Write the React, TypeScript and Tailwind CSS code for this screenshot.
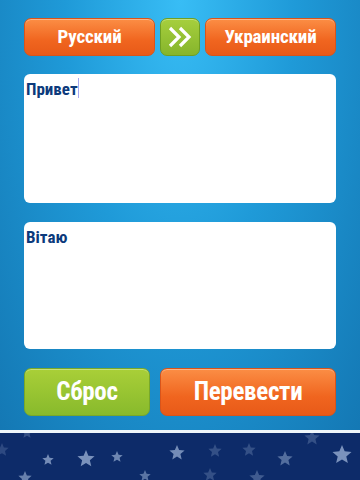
import React from "react";

const Star = ({ x, y, r, o }: { x: number; y: number; r: number; o: number }) => {
  const pts: string[] = [];
  for (let i = 0; i < 10; i++) {
    const a = -Math.PI / 2 + (i * Math.PI) / 5;
    const rr = i % 2 === 0 ? r : r * 0.45;
    pts.push(`${(x + rr * Math.cos(a)).toFixed(2)},${(y + rr * Math.sin(a)).toFixed(2)}`);
  }
  return <polygon points={pts.join(" ")} fill="#8ea5cb" opacity={o} />;
};

const stars = [
  { x: 27, y: 13, r: 6, o: 0.3 },
  { x: 2, y: 30, r: 7, o: 0.25 },
  { x: 48, y: 40, r: 6, o: 0.8 },
  { x: 86, y: 39, r: 9, o: 0.85 },
  { x: 117, y: 37, r: 6, o: 0.75 },
  { x: 145, y: 56, r: 6, o: 0.6 },
  { x: 177, y: 33, r: 8, o: 0.8 },
  { x: 25, y: 58, r: 7, o: 0.7 },
  { x: 215, y: 31, r: 7, o: 0.3 },
  { x: 249, y: 30, r: 7, o: 0.3 },
  { x: 285, y: 39, r: 8, o: 0.55 },
  { x: 312, y: 18, r: 8, o: 0.3 },
  { x: 342, y: 35, r: 10, o: 0.85 },
  { x: 210, y: 55, r: 7, o: 0.3 },
  { x: 257, y: 58, r: 8, o: 0.4 },
];

const font = { fontFamily: '"Liberation Sans Narrow", "Roboto Condensed", Roboto, sans-serif' };

export default function App() {
  return (
    <div className="w-[360px] h-[480px] flex flex-col overflow-hidden" style={font}>
      <div className="h-[430px] bg-[radial-gradient(ellipse_at_50%_0%,#38bdf5_0%,#1f9ad8_45%,#1478b4_100%)] px-[24px] pt-[18px] flex flex-col">
        <div className="flex h-[38px] gap-[5px]">
          <div className="flex-1 rounded-[7px] border border-[#d9541a] bg-[linear-gradient(#fb8e45,#f0651f_60%,#e85a18)] flex items-center justify-center text-white font-bold text-[19px] tracking-[-0.2px] shadow-[inset_0_1px_0_rgba(255,255,255,0.35)]">
            Русский
          </div>
          <div className="w-[40px] rounded-[7px] border border-[#6f9f23] bg-[linear-gradient(#a6cf3d,#86b52c)] flex items-center justify-center shadow-[inset_0_1px_0_rgba(255,255,255,0.35)]">
            <svg width="26" height="22" viewBox="0 0 26 22">
              <path d="M3 2 L12 11 L3 20" fill="none" stroke="white" strokeWidth="3.2" strokeLinejoin="miter" />
              <path d="M13 2 L22 11 L13 20" fill="none" stroke="white" strokeWidth="3.2" strokeLinejoin="miter" />
            </svg>
          </div>
          <div className="flex-1 rounded-[7px] border border-[#d9541a] bg-[linear-gradient(#fb8e45,#f0651f_60%,#e85a18)] flex items-center justify-center text-white font-bold text-[19px] tracking-[-0.2px] shadow-[inset_0_1px_0_rgba(255,255,255,0.35)]">
            Украинский
          </div>
        </div>
        <div className="mt-[18px] h-[129px] rounded-[6px] bg-white pl-[2px] pt-[4px]">
          <span className="text-[#0c3a7c] font-bold text-[17px] leading-[20px]">Привет</span>
          <span className="inline-block w-[1px] h-[20px] bg-[#a9a9f0] align-top" />
        </div>
        <div className="mt-[19px] h-[127px] rounded-[6px] bg-white pl-[2px] pt-[4px]">
          <span className="text-[#0c3a7c] font-bold text-[17px] leading-[20px]">Вітаю</span>
        </div>
        <div className="mt-[19px] flex h-[48px] gap-[10px]">
          <div className="w-[126px] rounded-[7px] border border-[#78a82a] bg-[linear-gradient(#a9cf38,#88ba2c)] flex items-center justify-center text-white font-bold text-[25px] tracking-[-0.3px] shadow-[inset_0_1px_0_rgba(255,255,255,0.35)]">
            Сброс
          </div>
          <div className="flex-1 rounded-[7px] border border-[#d9541a] bg-[linear-gradient(#fb8e45,#f0651f_60%,#e85a18)] flex items-center justify-center text-white font-bold text-[25px] tracking-[-0.3px] shadow-[inset_0_1px_0_rgba(255,255,255,0.35)]">
            Перевести
          </div>
        </div>
      </div>
      <div className="h-[3px] bg-[#eef6fb]" />
      <div className="flex-1 bg-[#0d2b69]">
        <svg width="360" height="47" viewBox="0 0 360 47">
          <g transform="translate(0,-13)">
            {stars.map((s, i) => (
              <Star key={i} {...s} />
            ))}
          </g>
        </svg>
      </div>
    </div>
  );
}
